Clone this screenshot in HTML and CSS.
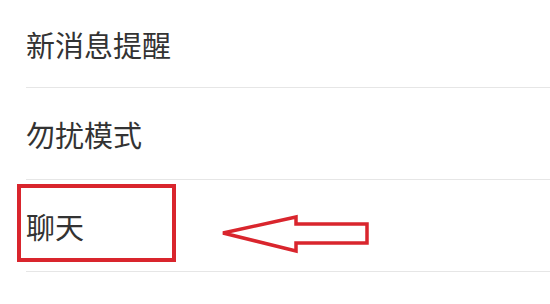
FILE: index.html
```html
<!DOCTYPE html>
<html lang="zh-CN">
<head>
    <meta charset="UTF-8">
    <meta name="viewport" content="width=device-width, initial-scale=1.0">
    <title>设置</title>
    <link rel="stylesheet" href="styles.css">
</head>
<body>
    <div class="settings-list">
        <div class="setting-item first">新消息提醒</div>
        <div class="setting-item">勿扰模式</div>
        <div class="setting-item">聊天</div>
    </div>

    <div class="highlight-box"></div>
    <svg class="arrow" width="160" height="50" viewBox="0 0 160 50">
        <polygon points="5,22 78,6 78,13 149,13 149,32 78,32 78,40" fill="none" stroke="#d9252d" stroke-width="3.5" stroke-linejoin="miter"/>
    </svg>
</body>
</html>
```

FILE: styles.css
```css
html, body {
    margin: 0;
    height: 100%;
}

body {
    background: #ffffff;
    font-family: "Noto Sans CJK SC", "Noto Sans", sans-serif;
    overflow: hidden;
    position: relative;
}

.settings-list {
    padding-left: 26px;
}

.setting-item {
    height: 91px;
    border-bottom: 1px solid #e6e6e6;
    display: flex;
    align-items: center;
    font-size: 29px;
    color: #333333;
}

.setting-item.first {
    height: 87px;
}

.highlight-box {
    position: absolute;
    left: 17px;
    top: 184px;
    width: 151px;
    height: 70px;
    border: 4px solid #d9252d;
}

.arrow {
    position: absolute;
    left: 218px;
    top: 211px;
}
```
